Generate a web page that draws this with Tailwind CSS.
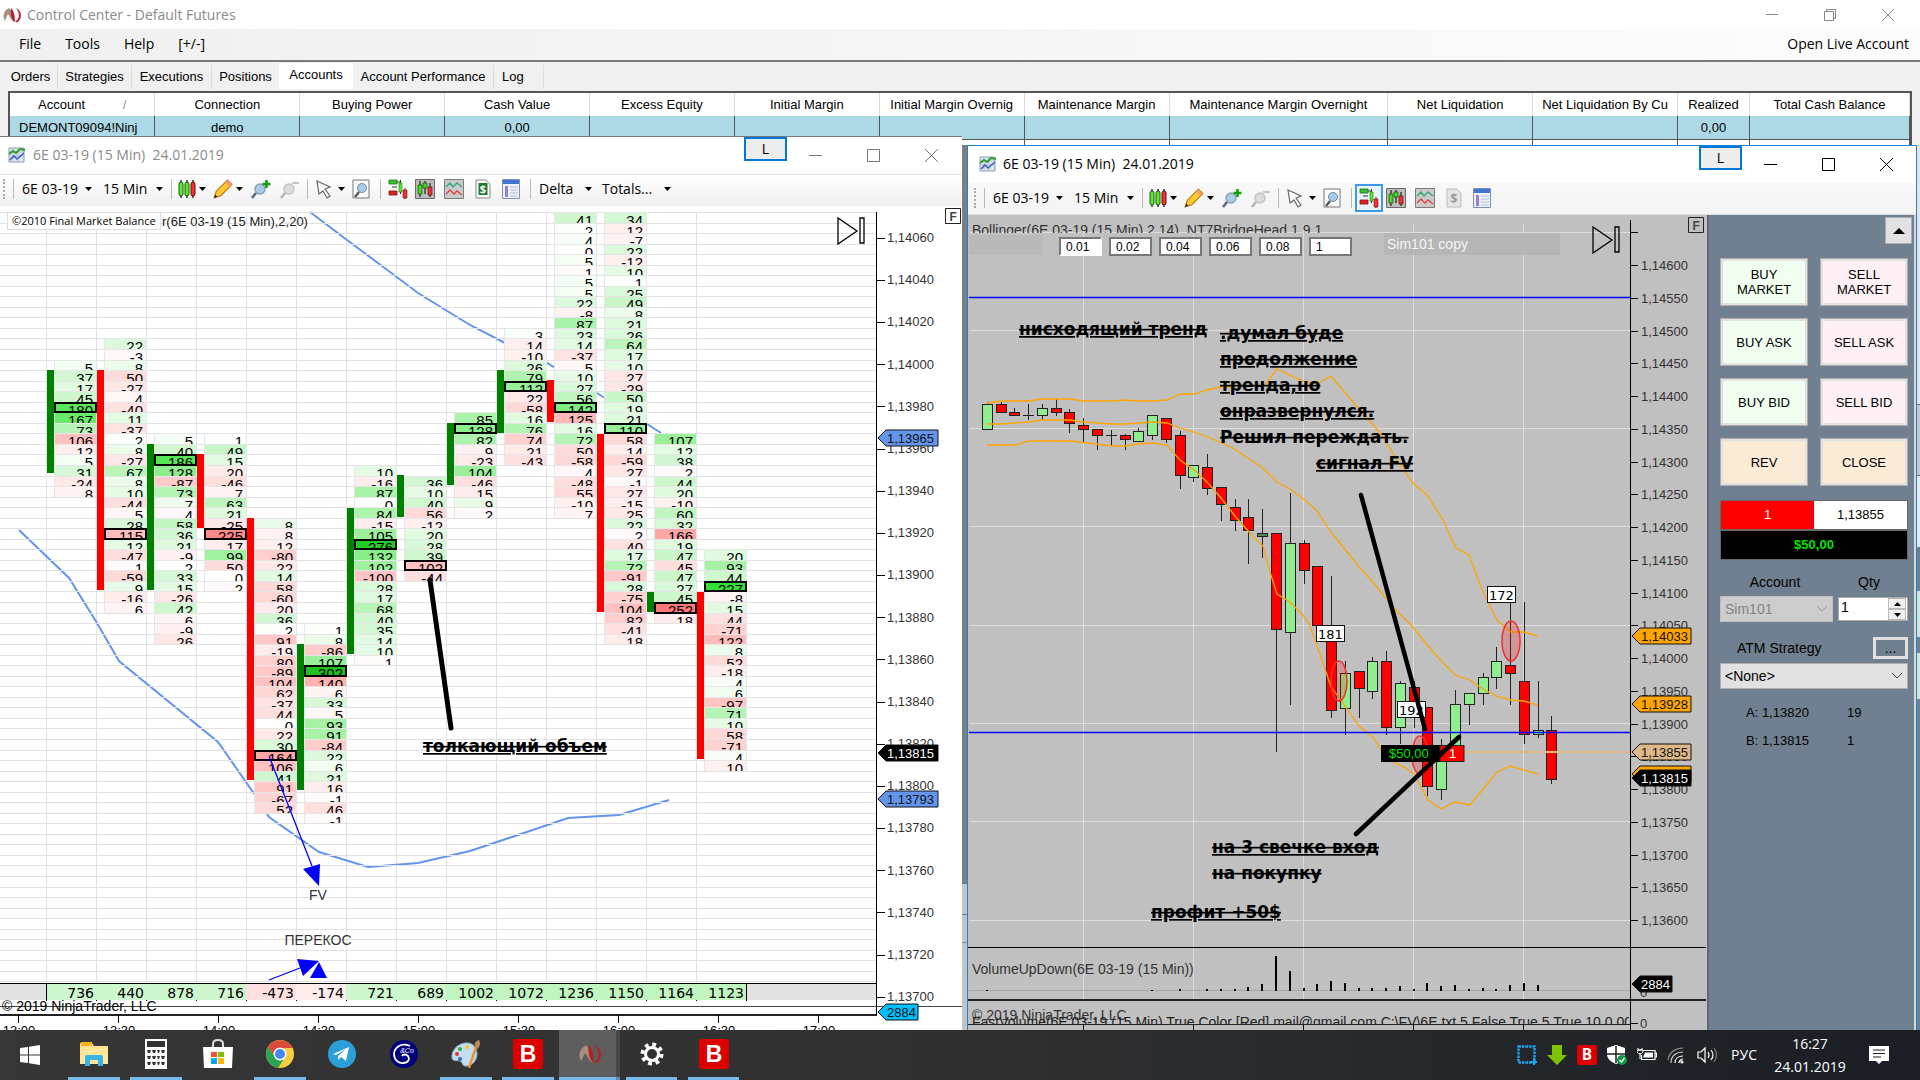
<!DOCTYPE html>
<html lang="ru">
<head>
    <meta charset="UTF-8">
    <meta name="viewport" content="width=device-width, initial-scale=1.0">
    <title>Control Center - Default Futures</title>
    <script src="https://cdn.jsdelivr.net/npm/@tailwindcss/browser@4"></script>
</head>
<body class="h-screen overflow-hidden flex flex-col bg-[#c8c8c8] font-['Liberation_Sans',sans-serif] text-black">

    <!-- Icon sprite -->
    <svg class="hidden">
        <symbol id="i-ninja" viewBox="0 0 20 16">
            <path d="M7 1C2 3 0 9 3 14c1-3 2-5 3-7 2 3 3 6 6 8C12 10 10 4 7 1z" fill="#a89080"/>
            <path d="M9 1c3 3 4 8 4 14 5-3 5-9 1-14 5 2 7 9 2 14-6 2-8-8-7-14z" fill="#b92025"/>
        </symbol>
        <symbol id="i-chart" viewBox="0 0 18 18">
            <path d="M1 2h15v14H1z" fill="#dfe6f2" stroke="#8c9bb8"/>
            <path d="M1 6h15M1 10h15M5 2v14M10 2v14" stroke="#a9b6d0" stroke-width=".8"/>
            <path d="M1 8l4-3 3 2 4-4 5 1" fill="none" stroke="#2b9c2b" stroke-width="2"/>
            <path d="M2 14l4-4 3 3 7-6" fill="none" stroke="#3a62b8" stroke-width="1.6"/>
        </symbol>
        <symbol id="i-candles" viewBox="0 0 18 20">
            <path d="M3 1v18M9 1v18M15 1v18" stroke="#222" stroke-width="1.4"/>
            <rect x="1" y="3" width="4" height="14" rx="2" fill="#5bea28" stroke="#1a5c10"/>
            <rect x="7" y="3" width="4" height="14" rx="2" fill="#5bea28" stroke="#1a5c10"/>
            <rect x="13" y="3" width="4" height="14" rx="2" fill="#ee3333" stroke="#611"/>
        </symbol>
        <symbol id="i-pencil" viewBox="0 0 18 18">
            <path d="M1 17l2-6L13 1l4 4L7 15z" fill="#ffc933" stroke="#b5780c"/>
            <path d="M13 1l4 4-2 2-4-4z" fill="#f29c6b"/>
            <path d="M1 17l1-3 2 2z" fill="#222"/>
        </symbol>
        <symbol id="i-zoomin" viewBox="0 0 20 20">
            <circle cx="9" cy="10" r="5" fill="#a9cbe6" stroke="#8aa0b4" stroke-width="1.4"/>
            <path d="M5 14l-4 5" stroke="#5e6a78" stroke-width="2.6"/>
            <path d="M15.500 1v8M11.500 5h8" stroke="#12a012" stroke-width="2.6"/>
        </symbol>
        <symbol id="i-zoomout" viewBox="0 0 20 20">
            <circle cx="9" cy="10" r="5" fill="#dcdcdc" stroke="#c2c2c2" stroke-width="1.4"/>
            <path d="M5 14l-4 5" stroke="#b4b4b4" stroke-width="2.600"/>
            <path d="M12 4h7" stroke="#c4c4c4" stroke-width="2"/>
        </symbol>
        <symbol id="i-cursor" viewBox="0 0 18 20">
            <path d="M2 2l13 6-5 2 5 7-3 2-4-7-4 3z" fill="#fff" stroke="#666" stroke-width="1.2"/>
        </symbol>
        <symbol id="i-page" viewBox="0 0 18 20">
            <path d="M1 1h16v18H1z" fill="#fafafa" stroke="#777"/>
            <circle cx="10" cy="9" r="4.500" fill="#a9cbe6" stroke="#6f88a0"/>
            <path d="M7 13l-4 5" stroke="#555" stroke-width="2.400"/>
        </symbol>
        <symbol id="i-trader" viewBox="0 0 20 20">
            <path d="M1 1h8v4H1z" fill="#36c22b" stroke="#1a7512" stroke-width=".8"/>
            <path d="M1 12h8v4H1z" fill="#d22" stroke="#811" stroke-width=".8"/>
            <path d="M9 8H4M9 3h3M12.500 1v14M17 9v11" stroke="#333"/>
            <path d="M11 4h3v9h-3z" fill="#5bea28" stroke="#1a7512" stroke-width=".6"/>
            <path d="M15 11h4v8h-4z" fill="#e33" stroke="#811" stroke-width=".6"/>
        </symbol>
        <symbol id="i-bars" viewBox="0 0 20 20">
            <path d="M.5.500h19v19H.5z" fill="#bcbcbc" stroke="#6a6a6a"/>
            <path d="M5 2v16M10 2v13M15 4v14" stroke="#222" stroke-width="1.200"/>
            <path d="M3 6h4v9H3zM8 4h4v5H8z" fill="#49d823" stroke="#174f0c" stroke-width=".7"/>
            <path d="M13 8h4v8h-4z" fill="#e33" stroke="#611" stroke-width=".7"/>
        </symbol>
        <symbol id="i-lines" viewBox="0 0 20 20">
            <path d="M.5.500h19v19H.5z" fill="#cacaca" stroke="#7a7a7a"/>
            <path d="M2 8l4-4 3 4 4-4 5 4" fill="none" stroke="#35a87a" stroke-width="1.400"/>
            <path d="M2 15l4-4 4 4 3-3 5 4" fill="none" stroke="#d44" stroke-width="1.400"/>
        </symbol>
        <symbol id="i-dollar" viewBox="0 0 16 20">
            <path d="M1 1h10l4 4v14H1z" fill="#fff" stroke="#888"/>
            <path d="M3.500 4h9v12h-9z" fill="#1f7d2c"/>
            <text x="8" y="14" font-size="11" font-weight="bold" text-anchor="middle" fill="#fff">$</text>
        </symbol>
        <symbol id="i-dollar-off" viewBox="0 0 16 20">
            <path d="M1 1h10l4 4v14H1z" fill="#e4e4e4" stroke="#bbb"/>
            <text x="8" y="15" font-size="12" font-weight="bold" text-anchor="middle" fill="#999">$</text>
        </symbol>
        <symbol id="i-panel" viewBox="0 0 18 20">
            <path d="M.5.500h17v19H.5z" fill="#eef3fb" stroke="#7d8fb3"/>
            <path d="M1 1h16v4H1z" fill="#3f74d0"/>
            <path d="M3 7h3v11H3z" fill="#9a7bea"/>
            <path d="M8 8h8M8 11h8M8 14h8M8 17h8" stroke="#aebbd4"/>
        </symbol>
        <symbol id="i-bit" viewBox="0 0 30 30">
            <rect width="30" height="30" rx="3" fill="#dc0000"/>
            <text x="15" y="23" font-size="23" font-weight="bold" text-anchor="middle" fill="#fff">B</text>
        </symbol>
    </svg>

    <div class="relative flex-1 overflow-hidden">

        <!-- Control Center -->
        <section class="bg-[#f0f0f0]">
            <header class="h-[29px] bg-white flex items-center text-[#8a8a8a]">
                <svg class="w-5 h-4 ml-[2px]"><use href="#i-ninja"/></svg>
                <h1 class="ml-[5px] text-sm font-['Open_Sans',sans-serif]">Control Center - Default Futures</h1>
                <div class="ml-auto flex items-center gap-[46px] pr-[26px]">
                    <button aria-label="Minimize"><svg class="w-3 h-3" viewBox="0 0 12 12"><path d="M0 5.500h12" stroke="#888"/></svg></button>
                    <button aria-label="Restore"><svg class="w-3 h-3" viewBox="0 0 12 12"><path d="M.5 2.500h9v9h-9zM2.500 2.500v-2h9v9h-2" fill="none" stroke="#888"/></svg></button>
                    <button aria-label="Close"><svg class="w-3 h-3" viewBox="0 0 12 12"><path d="M0 0l12 12M12 0L0 12" stroke="#888"/></svg></button>
                </div>
            </header>
            <nav class="h-[31px] flex items-center px-[11px] pb-[2px] text-sm font-['Open_Sans',sans-serif] bg-linear-to-r from-[#f0f0f0] to-[#fcfcfc]">
                <button class="px-2 mr-2">File</button>
                <button class="px-2 mr-2">Tools</button>
                <button class="px-2 mr-2">Help</button>
                <button class="px-2">[+/-]</button>
                <a href="#" class="ml-auto">Open Live Account</a>
            </nav>
            <div class="border-t-2 border-[#7a7a7a] pl-1 h-[31px] flex items-end pb-[2px]">
                <button class="h-6 w-[54px] border-r border-[#dcdcdc] text-[13px]">Orders</button>
                <button class="h-6 w-[74px] border-r border-[#dcdcdc] text-[13px]">Strategies</button>
                <button class="h-6 w-20 border-r border-[#dcdcdc] text-[13px]">Executions</button>
                <button class="h-6 w-[67px] text-[13px]">Positions</button>
                <button class="h-[26px] w-[74px] bg-white text-[13px] pb-[3px]">Accounts</button>
                <button class="h-6 w-[141px] border-r border-[#dcdcdc] text-[13px] whitespace-nowrap">Account Performance</button>
                <button class="h-6 w-[50px] border-r border-[#dcdcdc] text-[13px] text-left pl-2">Log</button>
            </div>
            <div class="h-[54px] mx-2 bg-white border-2 border-b-0 border-[#555] overflow-hidden">
                <table class="w-full table-fixed border-collapse text-[13px] whitespace-nowrap">
                    <thead><tr id="accHead" class="h-[23px]"></tr></thead>
                    <tbody>
                        <tr id="accRow" class="h-[23px] bg-[#add8e6] border-b border-[#555]"></tr>
                        <tr id="accBlank" class="h-3"></tr>
                    </tbody>
                </table>
            </div>
        </section>

        <!-- Left chart window -->
        <section class="absolute left-0 top-[136px] bottom-0 w-[962px] bg-white flex flex-col border-t border-[#777]">
            <header class="h-[37px] flex items-start text-[#8a8a8a]">
                <svg class="w-[18px] h-[18px] ml-2 mt-[9px]"><use href="#i-chart"/></svg>
                <h2 class="ml-[7px] mt-2 text-sm leading-5 whitespace-pre font-['Open_Sans',sans-serif]">6E 03-19 (15 Min)  24.01.2019</h2>
                <button class="ml-auto w-[43px] h-6 border-2 border-[#0078d7] bg-[#ededed] text-black text-sm font-['Open_Sans',sans-serif] leading-[18px]">L</button>
                <div class="flex items-center gap-[45px] pl-[22px] pr-6 mt-3">
                    <button aria-label="Minimize"><svg class="w-[13px] h-[13px]" viewBox="0 0 13 13"><path d="M0 6.500h13" stroke="#777"/></svg></button>
                    <button aria-label="Maximize"><svg class="w-[13px] h-[13px]" viewBox="0 0 13 13"><path d="M.5.500h12v12H.5z" fill="none" stroke="#777"/></svg></button>
                    <button aria-label="Close"><svg class="w-[13px] h-[13px]" viewBox="0 0 13 13"><path d="M0 0l13 13M13 0L0 13" stroke="#777"/></svg></button>
                </div>
            </header>
            <div id="toolbarLeft" class="h-8 pb-1 flex items-center text-sm font-['Open_Sans',sans-serif] border-t border-[#e2e2e2] bg-linear-to-b from-white to-[#f0f0f0]"></div>
            <div class="flex-1 relative overflow-hidden">
                <svg id="footprint" class="block w-[962px] h-[824px]" viewBox="0 206 962 824"></svg>
                <div class="absolute left-[7px] top-[6px] h-[18px] px-1 bg-white border border-[#ddd] text-[11px] leading-4 font-['Open_Sans',sans-serif]">©2010 Final Market Balance</div>
            </div>
        </section>

        <div class="absolute left-[962px] top-[145px] bottom-0 w-[5px] bg-[#c4c4c4]">
            <div class="h-[738px] bg-[#7d7f80]"></div>
            <div class="h-8 border-y border-[#777]"></div>
            <div class="h-7 border-b border-[#888]"></div>
        </div>
        <div class="absolute right-0 top-[145px] bottom-0 w-[3px] flex flex-col bg-[#708090]">
            <div class="h-[259px] bg-[#e4e4e4]"></div>
            <div class="h-[72px] bg-[#c8c8c8] border-y border-[#666]"></div>
            <div class="h-[71px] bg-[#e8e8e8]"></div>
            <div class="mt-11 h-[46px] bg-[#d4e4d4]"></div>
            <div class="mt-4 h-[46px] bg-[#d4e4d4]"></div>
        </div>

        <!-- Right chart window -->
        <section class="absolute left-[967px] right-[3px] top-[145px] bottom-0 bg-white flex flex-col border border-b-0 border-[#1883d7]">
            <header class="h-[37px] flex items-start">
                <svg class="w-[18px] h-[18px] ml-[11px] mt-[9px]"><use href="#i-chart"/></svg>
                <h2 class="ml-[6px] mt-2 text-sm leading-5 whitespace-pre font-['Open_Sans',sans-serif]">6E 03-19 (15 Min)  24.01.2019</h2>
                <button class="ml-auto w-[43px] h-6 border-2 border-[#0078d7] bg-[#ededed] text-sm font-['Open_Sans',sans-serif] leading-[18px]">L</button>
                <div class="flex items-center gap-[45px] pl-[22px] pr-[23px] mt-3">
                    <button aria-label="Minimize"><svg class="w-[13px] h-[13px]" viewBox="0 0 13 13"><path d="M0 6.500h13" stroke="#000"/></svg></button>
                    <button aria-label="Maximize"><svg class="w-[13px] h-[13px]" viewBox="0 0 13 13"><path d="M.5.500h12v12H.5z" fill="none" stroke="#000"/></svg></button>
                    <button aria-label="Close"><svg class="w-[13px] h-[13px]" viewBox="0 0 13 13"><path d="M0 0l13 13M13 0L0 13" stroke="#000"/></svg></button>
                </div>
            </header>
            <div id="toolbarRight" class="h-8 pl-[3px] pb-[2px] flex items-center text-sm font-['Open_Sans',sans-serif] bg-linear-to-b from-[#f8f8f8] to-[#f4f4f4] border-b border-[#ddd]"></div>
            <div class="flex-1 flex overflow-hidden">
                <div class="flex-1 relative overflow-hidden bg-[#c0c0c0]">
                    <svg id="candles" class="block w-[738px] h-[815px]" viewBox="968 215 738 815"></svg>
                    <div class="absolute left-[1px] top-5 h-5 w-[74px] bg-[#b9b9b9]"></div>
                    <form class="absolute left-[91px] top-[22px] flex gap-[7px]" id="lots"></form>
                    <div class="absolute left-[416px] top-[18px] h-[22px] w-[176px] pl-[3px] bg-[#b6b6b6] text-[#f4f4f4] text-sm leading-[22px]">Sim101 copy</div>
                </div>

                <!-- Chart Trader -->
                <aside class="w-[209px] bg-[#708090] border-l-2 border-[#5f6a74] border-r-2 border-r-[#d8d8d8] flex flex-col text-[13px]">
                    <button aria-label="Collapse" class="self-end mr-[2px] mt-[2px] w-[27px] h-[27px] bg-[#e1e1e1] border border-[#adadad] grid place-items-center">
                        <svg class="w-3 h-2" viewBox="0 0 12 8"><path d="M0 7l6-6 6 6z"/></svg>
                    </button>
                    <div class="pl-[11px] pr-[6px]">
                        <div class="mt-[14px] grid grid-cols-2 gap-3 leading-[15px]">
                            <button class="h-12 border border-[#adadad] outline-2 -outline-offset-3 outline-[#e1e1e1] bg-[#f0fff0]">BUY<br>MARKET</button>
                            <button class="h-12 border border-[#adadad] outline-2 -outline-offset-3 outline-[#e1e1e1] bg-[#fff0f5]">SELL<br>MARKET</button>
                            <button class="h-12 border border-[#adadad] outline-2 -outline-offset-3 outline-[#e1e1e1] bg-[#f0fff0]">BUY ASK</button>
                            <button class="h-12 border border-[#adadad] outline-2 -outline-offset-3 outline-[#e1e1e1] bg-[#fff0f5]">SELL ASK</button>
                            <button class="h-12 border border-[#adadad] outline-2 -outline-offset-3 outline-[#e1e1e1] bg-[#f0fff0]">BUY BID</button>
                            <button class="h-12 border border-[#adadad] outline-2 -outline-offset-3 outline-[#e1e1e1] bg-[#fff0f5]">SELL BID</button>
                            <button class="h-12 border border-[#adadad] outline-2 -outline-offset-3 outline-[#e1e1e1] bg-[#faebd7]">REV</button>
                            <button class="h-12 border border-[#adadad] outline-2 -outline-offset-3 outline-[#e1e1e1] bg-[#faebd7]">CLOSE</button>
                        </div>
                        <div class="mt-[14px] grid grid-cols-2 h-[30px] border border-[#696969] text-center leading-7">
                            <span class="bg-[#ff0000] text-white">1</span>
                            <span class="bg-white">1,13855</span>
                        </div>
                        <div class="h-[30px] bg-black border border-[#696969] text-center font-bold leading-7 text-[#00e400]">$50,00</div>
                        <div class="mt-3 flex text-sm leading-5">
                            <label for="account" class="w-[110px] text-center">Account</label>
                            <label for="qty" class="ml-auto w-[78px] text-center">Qty</label>
                        </div>
                        <div class="mt-1 flex items-center justify-between">
                            <div class="relative w-[113px]">
                                <select id="account" disabled class="appearance-none w-full h-[26px] pl-1 text-sm leading-5 bg-[#cccccc] border border-[#bfbfbf] text-[#838383] opacity-100"><option>Sim101</option></select>
                                <svg class="absolute right-[5px] top-[9px] w-3 h-2" viewBox="0 0 12 8"><path d="M1 1l5 5 5-5" fill="none" stroke="#999"/></svg>
                            </div>
                            <div class="flex w-[70px] h-6 bg-white border border-[#aaa]">
                                <input id="qty" type="text" value="1" class="w-[49px] pl-[2px] pb-1 text-sm bg-white">
                                <div class="flex flex-col w-[18px]">
                                    <button aria-label="Up" class="h-[11px] bg-[#f0f0f0] border border-[#bbb] grid place-items-center"><svg class="w-[7px] h-1" viewBox="0 0 7 4"><path d="M0 4l3.500-4L7 4z"/></svg></button>
                                    <button aria-label="Down" class="h-[11px] bg-[#f0f0f0] border border-[#bbb] grid place-items-center"><svg class="w-[7px] h-1" viewBox="0 0 7 4"><path d="M0 0l3.500 4L7 0z"/></svg></button>
                                </div>
                            </div>
                        </div>
                        <div class="mt-[15px] flex items-center text-sm">
                            <label for="atm" class="pl-[17px]">ATM Strategy</label>
                            <button class="ml-auto w-[35px] h-[22px] border-[3px] border-[#e1e1e1] leading-3">...</button>
                        </div>
                        <div class="mt-1 relative">
                            <select id="atm" class="appearance-none w-full h-[26px] pl-1 text-sm leading-5 bg-[#e1e1e1] border border-[#adadad]"><option>&lt;None&gt;</option></select>
                            <svg class="absolute right-[5px] top-[9px] w-3 h-2" viewBox="0 0 12 8"><path d="M1 1l5 5 5-5" fill="none" stroke="#444"/></svg>
                        </div>
                        <dl class="mt-[10px] grid grid-cols-[101px_1fr] pl-[26px] leading-7">
                            <dt>A: 1,13820</dt><dd>19</dd>
                            <dt>B: 1,13815</dt><dd>1</dd>
                        </dl>
                    </div>
                </aside>
            </div>
        </section>
    </div>

    <!-- Taskbar -->
    <footer class="h-[50px] shrink-0 flex items-stretch text-white bg-linear-to-r from-[#363636] via-[#303030] to-[#1a1f25]">
        <button aria-label="Start" class="w-[60px] grid place-items-center">
            <svg class="w-5 h-5" viewBox="0 0 20 20" fill="#fff"><path d="M0 3l8-1v7.500H0zM9 1.800L20 0v9.500H9zM0 10.500h8V18l-8-1zM9 10.500h11V20L9 18.200z"/></svg>
        </button>
        <button aria-label="Explorer" class="w-[52px] ml-2 grid place-items-center border-b-3 border-[#76b9ed]">
            <svg class="w-7 h-7" viewBox="0 0 28 28"><path d="M0 3h12l2 3h14v18H0z" fill="#ffe08c"/><path d="M1 2h11v4H1z" fill="#f4b520"/><path d="M0 8h28v16H0z" fill="#ffe699"/><path d="M5 26V17q0-2 2-2h14q2 0 2 2v9h-5v-6h-8v6z" fill="#39b4e8"/></svg>
        </button>
        <button aria-label="Calculator" class="w-[52px] ml-[10px] grid place-items-center border-b-3 border-[#76b9ed]">
            <svg class="w-6 h-[30px]" viewBox="0 0 24 30"><path d="M1 0h22v30H1z" fill="#fff"/><path d="M3 2h18v6H3z" fill="#333"/><path d="M3 11h4l-1 3H4zm5 0h4l-1 3H9zm5 0h3l-1 3h-1zm4 0h4l-1 3h-2zM3 17h4l-1 3H4zm5 0h4l-1 3H9zm5 0h3l-1 3h-1zm4 0h4l-1 3h-2zM3 23h4l-1 3H4zm5 0h4l-1 3H9zm5 0h3l-1 3h-1zm4 0h4l-1 3h-2z" fill="#333"/></svg>
        </button>
        <button aria-label="Store" class="w-[52px] ml-[10px] pb-[3px] grid place-items-center">
            <svg class="w-[30px] h-[30px]" viewBox="0 0 30 30"><path d="M10 9V5q0-4 5-4t5 4v4" fill="none" stroke="#ddd" stroke-width="2"/><path d="M0 8h30l-1 21H1z" fill="#fff"/><path d="M8 13h6v5H8z" fill="#f35325"/><path d="M15 13h6v5h-6z" fill="#81bc06"/><path d="M8 19h6v6H8z" fill="#05a6f0"/><path d="M15 19h6v6h-6z" fill="#ffba08"/></svg>
        </button>
        <button aria-label="Chrome" class="w-[52px] ml-[10px] grid place-items-center border-b-3 border-[#76b9ed]">
            <svg class="w-7 h-7" viewBox="0 0 28 28"><circle cx="14" cy="14" r="14" fill="#fbce40"/><path d="M2 7a14 14 0 0 1 24.500 1H14a6 6 0 0 0-6 8z" fill="#dc4a3d"/><path d="M2 7a14 14 0 0 0 10 21l6-9a6 6 0 0 1-9-2z" fill="#2fa355"/><circle cx="14" cy="14" r="6.500" fill="#fff"/><circle cx="14" cy="14" r="5" fill="#4688f1"/></svg>
        </button>
        <button aria-label="Telegram" class="w-[52px] ml-[10px] pb-[3px] grid place-items-center">
            <svg class="w-7 h-7" viewBox="0 0 28 28"><circle cx="14" cy="14" r="14" fill="#2a9fd8"/><path d="M5 14l16-7-3 14-5-4-3 3v-4l8-7-10 6z" fill="#fff"/></svg>
        </button>
        <button aria-label="G&amp;Co" class="w-[52px] ml-[10px] pb-[3px] grid place-items-center">
            <svg class="w-7 h-7" viewBox="0 0 28 28"><circle cx="14" cy="14" r="14" fill="#00007d"/><path d="M20 6C11 2 4 8 4 14s5 10 10 9c5-1 6-4 4-7-2-2-5-2-6 0" fill="none" stroke="#fff" stroke-width="1.800"/><text x="17" y="13" font-size="7" text-anchor="middle" font-style="italic" fill="#fff">&amp;Co</text></svg>
        </button>
        <button aria-label="Paint" class="w-[52px] ml-[10px] grid place-items-center border-b-3 border-[#76b9ed]">
            <svg class="w-[30px] h-[28px]" viewBox="0 0 30 28"><path d="M14 3c8-1 12 5 12 11s-5 13-12 12c-3 0-2-4-5-5s-7 1-8-3C0 11 6 4 14 3z" fill="#c2dff0" stroke="#88aac4"/><circle cx="6" cy="14" r="2" fill="#d33"/><circle cx="9" cy="9" r="2" fill="#3a3"/><circle cx="16" cy="7" r="2" fill="#fb3"/><circle cx="9" cy="19" r="2" fill="#36c"/><path d="M25 7l-7 21" stroke="#e8922c" stroke-width="2.400"/><path d="M24 8c-1-4 0-7 4-8 2 3 1 7-2 9z" fill="#b98a55"/></svg>
        </button>
        <button aria-label="Bitdefender" class="w-[52px] ml-[10px] grid place-items-center border-b-3 border-[#76b9ed]"><svg class="w-[30px] h-[30px]"><use href="#i-bit"/></svg></button>
        <button aria-label="NinjaTrader" class="w-[57px] ml-[5px] pl-1 grid place-items-center bg-[#5e5e5e] border-b-3 border-[#76b9ed]"><svg class="w-7 h-5"><use href="#i-ninja"/></svg></button>
        <div class="w-1 bg-[#484848] border-b-3 border-[#5c8fb8]"></div>
        <button aria-label="Settings" class="w-[51px] ml-[6px] grid place-items-center border-b-3 border-[#76b9ed]">
            <svg class="w-6 h-6" viewBox="0 0 24 24"><circle cx="12" cy="12" r="9.500" fill="none" stroke="#fff" stroke-width="4" stroke-dasharray="3.730 3.730"/><circle cx="12" cy="12" r="6.500" fill="none" stroke="#fff" stroke-width="3"/></svg>
        </button>
        <button aria-label="Bitdefender window" class="w-[51px] ml-[11px] grid place-items-center border-b-3 border-[#76b9ed]"><svg class="w-[30px] h-[30px]"><use href="#i-bit"/></svg></button>

        <div class="ml-auto flex items-center gap-[10px] font-['Open_Sans',sans-serif]">
            <svg class="w-5 h-5" viewBox="0 0 20 20"><path d="M1.500 1.500h16v16h-16z" fill="none" stroke="#18a6ef" stroke-width="2.400" stroke-dasharray="2.500 1"/><path d="M17 13v7M13 17h7" stroke="#18a6ef" stroke-width="2"/></svg>
            <svg class="w-5 h-5" viewBox="0 0 20 20"><path d="M5 0h10v10h5L10 20 0 10h5z" fill="#7dc400"/></svg>
            <svg class="w-5 h-5"><use href="#i-bit"/></svg>
            <svg class="w-5 h-5" viewBox="0 0 20 20"><path d="M9 0l9 3v6c0 5-5 9-9 10C4 17 0 14 0 9V3z" fill="#fff"/><path d="M9 1v17M0 9h18" stroke="#222" stroke-width="1.500"/><circle cx="15" cy="15" r="5" fill="#149647"/><path d="M12.500 15l2 2 3-4" fill="none" stroke="#fff" stroke-width="1.300"/></svg>
            <svg class="w-5 h-5" viewBox="0 0 20 20"><path d="M6 5.500h12v9H4.500V10M18 8h1.500v4H18" fill="none" stroke="#fff" stroke-width="1.200"/><path d="M8 7.500h8v5H6z" fill="#fff"/><path d="M1 3v2h4V3M0 5h6v2q-3 4-6 0zM3 8v6" fill="none" stroke="#fff"/></svg>
            <svg class="w-5 h-5" viewBox="0 0 20 20" fill="none" stroke="#fff" stroke-width="1.200"><path d="M4 18C4 10 10 7 16 7" opacity=".8"/><path d="M1 15C2 7 9 3 16 3" opacity=".5"/><path d="M8 18c0-5 4-7 8-7M12 18c0-2 2-4 4-4"/><circle cx="15" cy="17" r="1" fill="#fff"/></svg>
            <svg class="w-5 h-5" viewBox="0 0 20 20" fill="none" stroke="#fff" stroke-width="1.200"><path d="M1 7h3l4-4v14l-4-4H1zM11 7q2 3 0 6M14 5q4 5 0 10"/><path d="M17 3q5 7 0 14" opacity=".4"/></svg>
            <span class="text-sm ml-1">РУС</span>
            <div class="w-[86px] mr-[6px] text-center text-sm leading-[23px]">16:27<br>24.01.2019</div>
            <button aria-label="Notifications" class="mr-[31px]"><svg class="w-5 h-5" viewBox="0 0 20 20"><path d="M0 1h20v15h-7l-3 3-3-3H0z" fill="#fff"/><path d="M4 5h12M4 8.500h12M4 12h8" stroke="#222" stroke-width="1.200"/></svg></button>
        </div>
    </footer>

    <script>
        // ---- accounts table ----
        const accCols = [
            ['Account', 145, 'DEMONT09094!Ninj'], ['Connection', 145, 'demo'], ['Buying Power', 145, ''],
            ['Cash Value', 145, '0,00'], ['Excess Equity', 145, ''], ['Initial Margin', 145, ''],
            ['Initial Margin Overnig', 145, ''], ['Maintenance Margin', 145, ''], ['Maintenance Margin Overnight', 219, ''],
            ['Net Liquidation', 145, ''], ['Net Liquidation By Cu', 145, ''], ['Realized', 72, '0,00'], ['Total Cash Balance', 160, '']
        ];
        document.getElementById('accHead').innerHTML = accCols.map(([t, w], i) =>
            `<th class="font-normal text-center border-r border-[#ddd] overflow-hidden" style="width:${(w / 19.01).toFixed(2)}%">${i ? t : t + '<span class="pl-[38px] text-[#888] text-xs">/</span>'}</th>`).join('');
        document.getElementById('accRow').innerHTML = accCols.map((c, i) =>
            `<td class="${i ? 'text-center' : 'pl-[9px]'} border-r border-[#555] overflow-hidden">${c[2]}</td>`).join('');
        document.getElementById('accBlank').innerHTML = accCols.map(() => '<td class="border-r border-[#555]"></td>').join('');

        // ---- toolbars ----
        const caret = '<svg class="w-[7px] h-1 shrink-0" viewBox="0 0 7 4"><path d="M0 0h7L3.500 4z"/></svg>';
        const sep = '<span class="w-px h-5 shrink-0 bg-[#b8b8b8]"></span>';
        const icon = (id) => `<svg class="w-5 h-5 shrink-0"><use href="#${id}"/></svg>`;
        function toolbar(active) {
            return `
                <span class="ml-[3px] h-5 border-l-2 border-dotted border-[#aaa]"></span>
                <span class="ml-2 mr-2 flex">${sep}</span>
                <button class="w-[72px] pr-[2px] flex items-center justify-between whitespace-nowrap">6E 03-19 ${caret}</button>
                <button class="ml-[9px] w-[64px] pr-1 flex items-center justify-between whitespace-nowrap">15 Min ${caret}</button>
                <span class="ml-1 mr-[5px] flex">${sep}</span>
                <button class="flex items-center gap-[2px] w-[36px]" aria-label="Chart style">${icon('i-candles')}${caret}</button>
                <button class="flex items-center gap-[3px] w-[38px]" aria-label="Drawing tools">${icon('i-pencil')}${caret}</button>
                <button class="w-[29px]" aria-label="Zoom in">${icon('i-zoomin')}</button>
                <button class="w-[27px]" aria-label="Zoom out">${icon('i-zoomout')}</button>
                <span class="mr-[6px] flex">${sep}</span>
                <button class="flex items-center gap-1 w-[37px]" aria-label="Cursor">${icon('i-cursor')}${caret}</button>
                <button class="w-[29px]" aria-label="Data box">${icon('i-page')}</button>
                <span class="mr-[3px] flex">${sep}</span>
                <button class="w-7 h-7 grid place-items-center mr-[3px] ${active ? 'border-2 border-[#3c9be8] bg-[#eaf4fc]' : ''}" aria-label="Chart trader">${icon('i-trader')}</button>
                <button class="w-[29px]" aria-label="Bars">${icon('i-bars')}</button>
                <button class="w-[29px]" aria-label="Indicators">${icon('i-lines')}</button>
                <button class="w-[28px]" aria-label="Strategies">${icon(active ? 'i-dollar-off' : 'i-dollar')}</button>
                <button class="w-[29px]" aria-label="Properties">${icon('i-panel')}</button>`;
        }
        document.getElementById('toolbarLeft').innerHTML = toolbar(false) + `
            <span class="mr-2 flex">${sep}</span>
            <button class="w-[53px] flex items-center justify-between">Delta ${caret}</button>
            <button class="ml-[10px] w-[69px] flex items-center justify-between">Totals... ${caret}</button>`;
        document.getElementById('toolbarRight').innerHTML = toolbar(true);

        document.getElementById('lots').innerHTML = ['0.01', '0.02', '0.04', '0.06', '0.08', '1'].map(v =>
            `<input type="text" aria-label="Lot ${v}" value="${v}" class="w-[43px] h-[19px] pl-[5px] bg-white border-2 border-[#777] first:border-r-white first:border-b-white text-xs">`).join('');

        // ---- svg helpers ----
        const hline = (x1, x2, y, c, w = 1) => `<path d="M${x1} ${y}H${x2}" stroke="${c}" stroke-width="${w}"/>`;
        const vline = (x, y1, y2, c, w = 1) => `<path d="M${x} ${y1}V${y2}" stroke="${c}" stroke-width="${w}"/>`;
        const text = (x, y, s, extra = '', size = 13) => `<text x="${x}" y="${y}" font-size="${size}" ${extra}>${s}</text>`;
        const poly = (pts, c, w) => `<polyline points="${pts}" fill="none" stroke="${c}" stroke-width="${w}"/>`;
        const tag = (x, y, w, s, bg, fg = '#111') =>
            `<path d="M${x} ${y}l8 -8h${w - 8}v16h-${w - 8}z" fill="${bg}" stroke="#111"/>` + text(x + 9, y + 5, s, `fill="${fg}"`);
        const note = (x, y, s, cls) =>
            `<text x="${x}" y="${y}" font-size="17" font-weight="bold" class="font-['DejaVu_Sans',sans-serif] decoration-1 ${cls}">${s}</text>`;
        const both = '[text-decoration-line:underline_line-through]';
        const playEnd = (x, y) => `<path d="M${x} ${y}v26l19 -13zM${x + 22} ${y}h4v25h-4z" fill="none" stroke="#000" stroke-width="1.300"/>`;
        const fBox = (x, y, bg) => `<path d="M${x} ${y}h15v15h-15z" fill="${bg}" stroke="#222"/>` + text(x + 4, y + 12, 'F', 'font-weight="bold" fill="#444"', 12);

        // ---- footprint chart ----
        const rowTop = n => Math.round(212 + n * 10.54);
        const greens = [[0, 255, 255, 255], [5, 244, 253, 244], [10, 229, 251, 229], [30, 216, 248, 216], [50, 200, 246, 200], [73, 180, 244, 180],
            [107, 154, 240, 154], [128, 140, 238, 140], [180, 90, 232, 90], [230, 48, 224, 48], [300, 32, 192, 32]];
        const reds = [[0, 255, 251, 251], [10, 255, 240, 240], [30, 255, 229, 229], [50, 255, 220, 220], [100, 255, 196, 196], [166, 255, 166, 166],
            [225, 255, 136, 136], [260, 255, 116, 116]];
        function shade(v, stops) {
            for (let i = 1; i < stops.length; i++) {
                if (v <= stops[i][0]) {
                    const a = stops[i - 1], b = stops[i], t = (v - a[0]) / (b[0] - a[0]);
                    return `rgb(${[1, 2, 3].map(k => Math.round(a[k] + (b[k] - a[k]) * t)).join()})`;
                }
            }
            return `rgb(${stops[stops.length - 1].slice(1).join()})`;
        }
        // first row, bar colour, bar top, bar bottom, total, cells (r = sell side, * = max volume)
        const cols = [
            [14, 'g', 370, 473, 736, '5 37 17 45 180* 167 73 106r 12r 5 31 -24 8r'],
            [12, 'r', 370, 590, 440, '22 -3 8 50r -27 4r -40 11 -37 2 8 -27 67 8 10 -44 5r 28 115r* 12 -47 1r -59 9 -16 6r'],
            [21, 'g', 444, 590, 878, '5 40 186* 128 -87 73 7 4r 58 36 21 -9 2 33 15 -26 42 6r -9 26r'],
            [21, 'r', 454, 528, 716, '1 49 15 20r -46 7r 63 21 -25 225r* 17r 99 50r 0 2r'],
            [29, 'r', 518, 780, -473, '8 8r 12r -80 22r 14 58r -60 20r 36 2 91r -19 80r -89 104r 62r -37 44r 0 22r 30 164r* 106r 41 91r -67 52r'],
            [39, 'g', 644, 790, -174, '1 8 -86 107 302* 140r 6r 33 5r 93 91 -84 22 6 21 16r -1 46r -1'],
            [24, 'g', 508, 654, 721, '10 -16 87 0 84 -15 105 276* 132 102 -100 28 17 68 40 35 14 10 1r'],
            [25, 'g', 475, 517, 689, '36 10 40 56r -12 20 28 39 102r* -44'],
            [19, 'g', 423, 485, 1002, '85 128* 82 9r -23 104 -46 15r 9 2r'],
            [11, 'g', 370, 433, 1072, '3 14r -10 26 79 112* 22r -58 16 76 74r 21r -43'],
            [0, 'r', 380, 422, 1236, '41 2 4 0 5 1r 5 5 22 -8 87 23 14 -37 5r 10 27 56 142* 125r 16 72 50r -58 4r -48 55r -10 7r'],
            [0, 'r', 434, 612, 1150, '34 12r -7 22 -12 10 1 25 49 8 21 26 64 17 10 27r -29 50 19 21 110* 58r 14r -59 27r -1 27r -15 25r 22 2r 40r 17 72 -91 28 -75 104r 82r -41 18r'],
            [21, 'g', 592, 612, 1164, '107 12 38 2r 44 20 -10 60 32 166r 19 47 45r 47 27 45 252r* 18r'],
            [32, 'r', 592, 759, 1123, '20 93 44 227* -8 15 44r -71 122r 8 52r -18 4 6 -97 71 10 58r -71 4 10r']
        ];
        let s = '<g shape-rendering="crispEdges">';
        for (let i = 0; i < 14; i++) s += vline(46.5 + i * 50, 212, 983, '#e2e2e2');
        s += '</g>';
        s += poly('310,212 347,240 382,266 418,293 470,325 505,343 547,363 605,398 647,424 661,433', '#6495ed', 2);
        s += poly('19,530 69,578 97,623 119,661 218,742 255,795 269,817 319,852 368,867 418,863 470,851 518,835 568,818 619,815 669,800', '#6495ed', 2);
        s += '<g shape-rendering="crispEdges">';
        for (let n = 0; n < 74; n++) s += hline(0, 877, rowTop(n) + .5, '#e2e2e2');
        cols.forEach(([start, side, y1, y2, total, cells], i) => {
            const x = 46 + i * 50;
            const frames = [];
            cells.split(' ').forEach((cell, k) => {
                const v = parseInt(cell), top = rowTop(start + k), h = rowTop(start + k + 1) - top;
                const sell = v < 0 || cell.includes('r');
                s += `<rect x="${x + 8}" y="${top}" width="43" height="${h}" fill="#e6e6e6"/>`;
                s += `<svg x="${x + 9}" y="${top + 1}" width="41" height="${h - 1}"><rect width="41" height="12" fill="${shade(Math.abs(v), sell ? reds : greens)}"/>`;
                s += `<text x="38" y="13" font-size="15" text-anchor="end">${v}</text></svg>`;
                if (cell.includes('*')) frames.push(`<rect x="${x + 9}" y="${top + 1}" width="41" height="${h - 1}" fill="none" stroke="#000" stroke-width="2"/>`);
            });
            s += frames.join('') + `<rect x="${x + 1}" y="${y1}" width="7" height="${y2 - y1}" fill="${side === 'g' ? '#008000' : '#ff0000'}"/>`;
        });
        // totals strip
        s += '<rect x="0" y="983" width="877" height="17" fill="#e2e2e2"/>';
        cols.forEach((c, i) => {
            const t = c[4], fill = t < -300 ? '#ffe0e0' : t < 0 ? '#ffecec' : t > 1000 ? '#c0f5c0' : '#cff7cf';
            s += `<rect x="${46 + i * 50}" y="983" width="50" height="17" fill="${fill}"/>` + vline(96.5 + i * 50, 983, 1001, '#000');
            s += `<text x="${94 + i * 50}" y="998" font-size="14" text-anchor="end" class="font-['DejaVu_Sans',sans-serif]">${t}</text>`;
        });
        s += vline(46.5, 983, 1001, '#000') + hline(0, 877, 983.5, '#000');
        s += hline(0, 962, 1006.5, '#444') + hline(0, 877, 1014.5, '#222', 2) + vline(876.5, 212, 1015, '#000');
        for (let i = 0; i < 9; i++) s += vline(Math.round(19 + i * 100) - .5, 1015, 1023, '#000');
        for (let i = 0; i < 19; i++) s += hline(877, 885, Math.round(237.7 + i * 42.17) + .5, '#000');
        s += '</g>';
        ['13:00', '13:30', '14:00', '14:30', '15:00', '15:30', '16:00', '16:30', '17:00'].forEach((t, i) => {
            s += text(19 + i * 100, 1035, t, 'text-anchor="middle"');
        });
        for (let i = 0; i < 19; i++) s += text(887, Math.round(242 + i * 42.17), `1,${14060 - i * 20}`, 'fill="#333"');
        s += tag(878, 438, 60, '1,13965', '#6495ed') + tag(878, 753, 60, '1,13815', '#000', '#fff');
        s += tag(878, 799, 60, '1,13793', '#6495ed') + tag(878, 1012, 40, '2884', '#00bfff');
        s += '<g stroke="#00f" stroke-width="1.300"><path d="M269 756L312 866M269 980L300 968"/><path d="M303 869l17 -5l-1 22zM297 959l22 2l-16 15zM310 978l9 -16l8 16z" fill="#00f" stroke="none"/></g>';
        s += text(318, 900, 'FV', 'text-anchor="middle" fill="#333"', 14) + text(318, 945, 'ПЕРЕКОС', 'text-anchor="middle" fill="#333"', 14);
        s += text(2, 1011, '© 2019 NinjaTrader, LLC', '', 14);
        s += text(162, 226, 'r(6E 03-19 (15 Min),2,20)', 'fill="#222"', 13);
        s += '<path d="M430 580L451 728" stroke="#000" stroke-width="5" stroke-linecap="round"/>';
        s += note(423, 752, 'толкающий объем', both);
        s += playEnd(838, 218) + fBox(945.5, 208.5, '#fff');
        document.getElementById('footprint').innerHTML = s;

        // ---- candle chart ----
        const cx = i => Math.round(986.8 + i * 13.77);
        // colour, body top, body bottom, high, low
        const bars = [
            ['g', 404, 429, 402, 429], ['r', 404, 412, 402, 412], ['r', 412, 415, 408, 415], ['d', 415, 415, 404, 419], ['g', 408, 415, 404, 419],
            ['r', 408, 412, 399, 415], ['r', 412, 423, 409, 432], ['r', 425, 429, 418, 442], ['r', 429, 435, 429, 449], ['d', 435, 435, 430, 445],
            ['r', 435, 439, 434, 449], ['g', 431, 441, 428, 441], ['g', 415, 435, 415, 439], ['r', 418, 439, 418, 442], ['r', 435, 475, 431, 488],
            ['g', 465, 477, 465, 481], ['r', 467, 488, 454, 494], ['r', 487, 504, 487, 520], ['r', 507, 520, 499, 530], ['r', 517, 530, 499, 563],
            ['k', 533, 536, 509, 557], ['r', 533, 629, 533, 751], ['g', 543, 632, 493, 704], ['r', 543, 570, 540, 583], ['r', 566, 625, 566, 630],
            ['r', 630, 710, 576, 717], ['g', 673, 708, 661, 734], ['r', 671, 688, 671, 717], ['g', 661, 691, 657, 698], ['r', 661, 727, 651, 734],
            ['g', 683, 727, 681, 743], ['r', 687, 715, 681, 727], ['r', 707, 786, 707, 795], ['g', 745, 789, 739, 799], ['g', 704, 747, 690, 747],
            ['g', 693, 704, 693, 724], ['g', 677, 693, 673, 704], ['g', 661, 677, 647, 688], ['r', 665, 673, 602, 704], ['r', 681, 734, 602, 743],
            ['g', 730, 734, 681, 737], ['r', 730, 779, 716, 783]
        ];
        const fills = { g: '#90ee90', r: '#ff0000', k: '#4d8a4d', d: '#222' };
        const volume = { 0: 1, 12: 1, 14: 2, 16: 2, 17: 2, 18: 2, 19: 4, 20: 7, 21: 35, 22: 20, 23: 3, 24: 7, 25: 10, 26: 8, 27: 3, 28: 3, 29: 3,
            30: 5, 31: 2, 32: 8, 33: 5, 34: 6, 35: 2, 36: 3, 37: 2, 38: 6, 39: 8, 40: 6 };

        let r = '<g shape-rendering="crispEdges">';
        [1083.5, 1193.5, 1303.5, 1413.5, 1523.5].forEach(x => {
            r += vline(x, 225, 1000, '#dcdcdc') + vline(x, 1024, 1030, '#000');
        });
        [232.5, 330.5, 428.5, 526.5, 625.5, 723.5, 821.5, 920.5].forEach(y => { r += hline(970, 1630, y, '#dcdcdc'); });
        r += hline(969, 1630, 990.5, '#a8a8a8');
        // wick first, body over it
        bars.forEach(([c, t, b, hi, lo], i) => {
            const x = cx(i);
            r += vline(x + .5, hi, lo + 1, '#222');
            r += c === 'd' ? hline(x - 5, x + 6, t + .5, '#222')
                : `<rect x="${x - 4.5}" y="${t + .5}" width="10" height="${b - t}" fill="${fills[c]}" stroke="#222"/>`;
        });
        Object.keys(volume).forEach(i => { r += `<rect x="${cx(+i) - 1}" y="${991 - volume[i]}" width="2" height="${volume[i]}"/>`; });
        r += '</g>';
        r += poly('987,403 1002,401 1028,401 1042,399 1070,399 1083,401 1112,401 1125,400 1137,401 1153,401 1167,400 1180,394 1194,394 1207,390 1221,387 1265,385 1277,369 1305,382 1318,383 1331,376 1360,410 1382,435 1397,460 1413,483 1427,495 1442,518 1456,548 1469,555 1483,592 1497,620 1511,632 1524,632 1538,636', '#ffa500', 1.3);
        r += poly('987,424 1002,424 1028,422 1042,420 1070,420 1083,422 1112,424 1125,424 1153,422 1167,423 1180,428 1194,432 1208,437 1233,448 1263,468 1277,482 1290,489 1305,500 1317,511 1331,532 1360,568 1373,582 1395,609 1411,625 1433,652 1455,675 1470,680 1483,689 1496,696 1511,700 1524,701 1538,705', '#ffa500', 1.3);
        r += poly('987,445 1016,445 1028,441 1070,441 1097,444 1112,446 1125,446 1138,444 1153,443 1167,445 1180,460 1194,470 1208,483 1221,498 1235,516 1249,532 1263,546 1270,572 1277,594 1290,602 1303,615 1309,624 1314,637 1323,663 1331,687 1340,699 1359,726 1373,737 1380,748 1393,762 1406,768 1414,774 1428,800 1441,809 1455,802 1470,805 1484,788 1497,772 1510,766 1538,774', '#ffa500', 1.3);
        r += '<g fill="#ff0000" fill-opacity=".22" stroke="#f03030" stroke-width="1.500"><ellipse cx="1339" cy="681" rx="8" ry="20"/><ellipse cx="1511" cy="641" rx="9" ry="20"/><ellipse cx="1420" cy="755" rx="8" ry="19"/></g>';
        r += hline(969, 1630, 297.5, '#0000ff', 1.5) + hline(969, 1630, 732.5, '#0000ff', 1.5) + hline(1464, 1630, 752, '#deb887', 2);
        [[1316, 625, 181], [1487, 586, 172], [1397, 701, 192]].forEach(([x, y, t]) => {
            r += `<rect x="${x + .5}" y="${y + .5}" width="28" height="16" fill="#fff" stroke="#111"/><text x="${x + 2}" y="${y + 14}" font-size="13" class="font-['DejaVu_Sans',sans-serif]">${t}</text>`;
        });
        r += '<rect x="1381" y="745" width="59" height="17"/><rect x="1440" y="745.500" width="24" height="16" fill="#f00" stroke="#222"/>';
        r += text(1389, 758, '$50,00', 'fill="#00e400"') + text(1449, 758, '1', 'fill="#fff"');
        r += '<path d="M1361 495L1425 729M1356 834L1459 737" stroke="#000" stroke-width="4.500" stroke-linecap="round"/>';

        // axes and panes
        r += '<g shape-rendering="crispEdges">' + vline(1630.5, 220, 1030, '#000') + hline(968, 1706, 947.5, '#000') + hline(968, 1706, 1000, '#222', 2) + hline(968, 1630, 1024.5, '#222');
        for (let i = -1; i < 21; i++) r += hline(1631, 1638, Math.round(265 + i * 32.75) + .5, '#000');
        r += '</g>';
        for (let i = 0; i < 21; i++) r += text(1641, Math.round(270 + i * 32.75), `1,${14600 - i * 50}`, 'fill="#333"');
        r += text(1640, 997, '0', 'fill="#333"') + text(1640, 1028, '0', 'fill="#333"') + hline(1631, 1638, 1023.5, '#000');
        r += tag(1632, 636, 59, '1,14033', '#ffa500') + tag(1632, 704, 59, '1,13928', '#ffa500') + tag(1632, 752, 59, '1,13855', '#deb887');
        r += tag(1632, 774, 59, '1,13828', '#ffa500') + tag(1632, 778, 59, '1,13815', '#000', '#fff') + tag(1632, 984, 40, '2884', '#000', '#fff');

        r += '<svg x="969" y="215" width="660" height="18">' + text(3, 20, 'Bollinger(6E 03-19 (15 Min),2,14)&#160; NT7BridgeHead 1.9.1', 'fill="#333"', 14) + '</svg>';
        r += text(972, 974, 'VolumeUpDown(6E 03-19 (15 Min))', 'fill="#333"', 14);
        r += text(972, 1020, '© 2019 NinjaTrader, LLC', 'fill="#333"', 14);
        r += '<svg x="969" y="1014" width="660" height="10">' + text(3, 13, 'FastVolume(6E 03-19 (15 Min) True Color [Red] mail@gmail.com C:\\FV\\6E.txt 5 False True 5 True 10 0,00', 'fill="#222"', 14) + '</svg>';

        r += note(1019, 335, 'нисходящий тренд', both) + note(1220, 339, '.думал буде', both) + note(1220, 365, 'продолжение', both);
        r += note(1220, 391, 'тренда,но', both) + note(1220, 417, 'онразвернулся.', both) + note(1220, 443, 'Решил переждать.', 'line-through') + note(1316, 469, 'сигнал FV', both);
        r += note(1212, 853, 'на 3 свечке вход', both) + note(1212, 879, 'на покупку', 'line-through') + note(1151, 918, 'профит +50$', both);
        r += playEnd(1593, 227) + fBox(1688.5, 217.5, '#c0c0c0');
        document.getElementById('candles').innerHTML = r;
    </script>
</body>
</html>
